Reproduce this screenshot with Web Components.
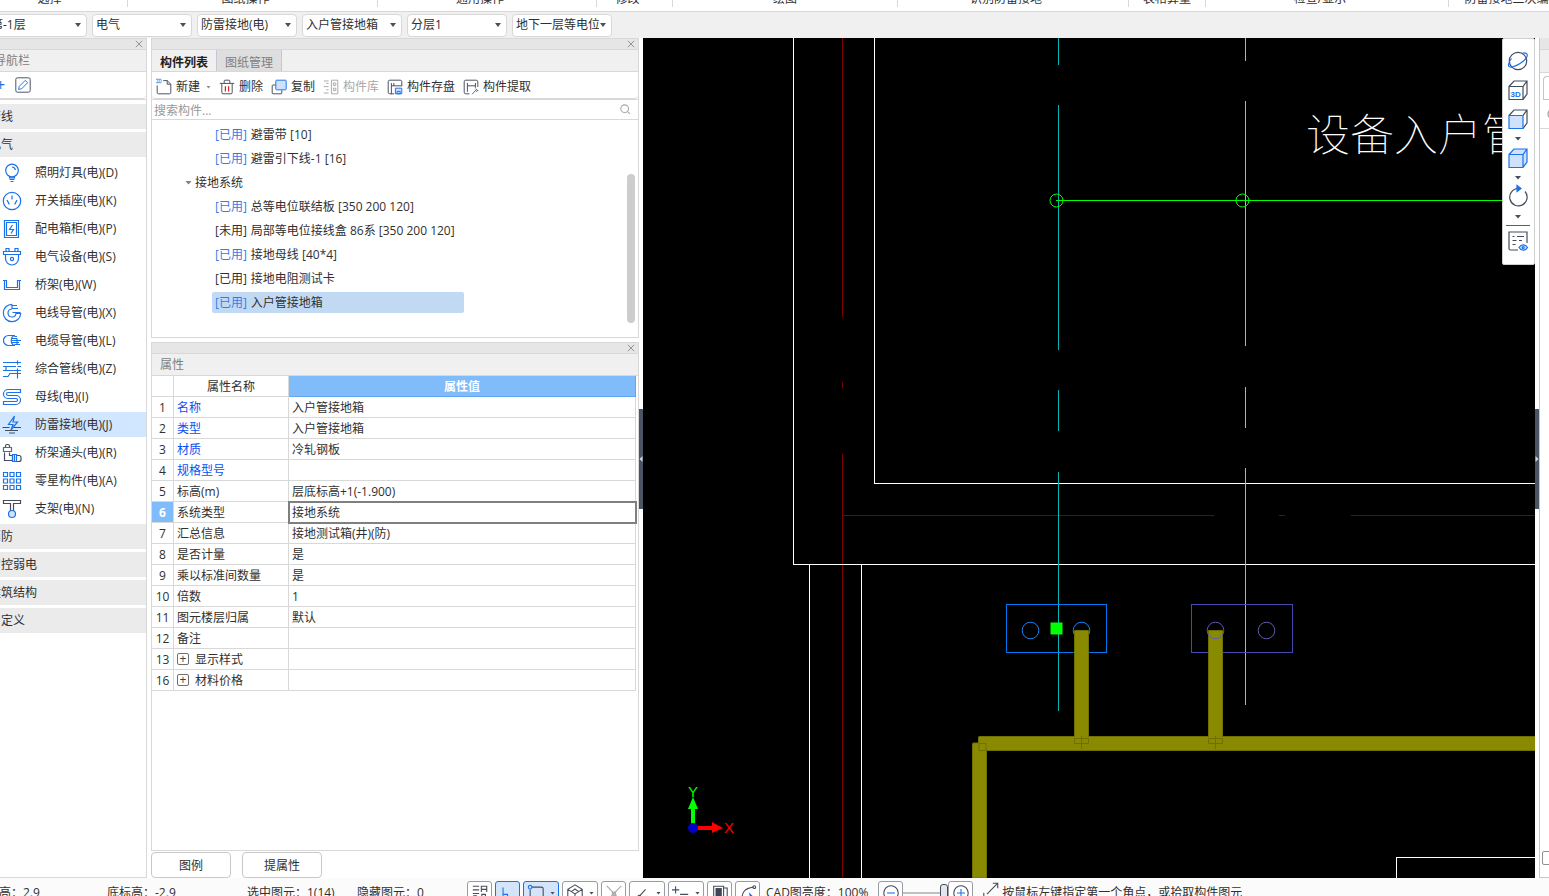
<!DOCTYPE html>
<html lang="zh-CN">
<head>
<meta charset="utf-8">
<title>防雷接地</title>
<style>
    html, body { height: 100%; margin: 0; }
    body {
        background: #fff;
        color: #303030;
        font: 12px/16px "Open Sans", "Noto Sans CJK SC", sans-serif;
        overflow: hidden;
    }
</style>
</head>
<body>
<cad-app></cad-app>

<script>
const ICONS = {
    // navigation
    bulb: '<circle cx="10" cy="7.5" r="6.3"/><path d="M10 4a3.5 3.5 0 0 1 3.4 3M7.5 13.3v1.5h5v-1.5M7.5 16.5h5M8.5 18.5h3"/>',
    socket: '<circle cx="10" cy="10" r="8.7"/><path d="M10 4.5v4M5 9l2.3 4.4M15 9l-2.3 4.4"/>',
    panel: '<path d="M2.5 1.5h14v17h-14zM4.5 3.5h10v13h-10z"/><path d="M10.5 6L7.5 10.5h4L9 14.5"/>',
    device: '<path d="M1.5 4.5h17v3h-17zM4 4.5v-3h3v3M13 4.5v-3h3v3M3.5 7.5v4c0 3.5 3 6.5 6.5 6.5s6.5-3 6.5-6.5v-4"/><circle cx="10" cy="12" r="1.6"/>',
    tray: '<path d="M1 5.5h3.5v7h11v-7H19M2.5 5.5v9h15v-9"/>',
    conduit: '<path d="M10 1.3a8.700 8.700 0 1 0 8.700 9.200H14a4 4 0 1 1-4-4.500M10 1.500v4.500M10 2.500h5M10 5.500h6M10.500 9.500h8"/>',
    cable: '<path d="M13 4.500H6.500a5 5 0 0 0 0 10h6M13 4.500c-5 1-5 9 0 10M10 7.500h5M10 9.500h9M10 11.500h7M12.500 13.500H18M15 7.500V13M12.500 5.500H15"/>',
    pipes: '<path d="M1 3.500h18M1 7.500h13M1 11.500h18M1 17.500h5l2-3h11M15.500 1.500v4M15.500 9.500v10M4 7.500v4M15.500 7.500H19"/>',
    busbar: '<path d="M18.500 2.500H6a4 4 0 0 0 0 9h8a1.500 1.500 0 0 1 0 3H1.500v3H14a4.500 4.500 0 0 0 0-9H6a1.500 1.500 0 0 1 0-3h12.500z"/>',
    ground: '<path d="M12.500 1L6.500 9.500H11L9 15l6.500-8H11z"/><path class="ink" d="M.500 12.500h7M12 12.500h7M3 15.500h13M7 18h6"/>',
    joint: '<g class="ink"><path d="M3.500 4.500V3a1.500 1.500 0 0 1 1.500-1.500h1A1.500 1.500 0 0 1 7.500 3v1.500M2.500 9.500v8h8v-5h-3v-3M14.500 12.500H17a2 2 0 0 1 2 2v2a2 2 0 0 1-2 2h-2.500"/></g><path d="M1.500 4.500h8v4h-8zM10.500 11.500h4v7h-4zM12.500 11.500v7"/>',
    grid: '<path d="M1.500 1.500h4v4h-4zM8 1.500h4v4H8zM14.500 1.500h4v4h-4zM1.500 8h4v4h-4zM8 8h4v4H8zM14.500 8h4v4h-4zM1.500 14.500h4v4h-4zM8 14.500h4v4H8zM14.500 14.500h4v4h-4z"/>',
    bracket: '<path class="ink" d="M1.500 1.500h17v3h-7V12h-3V4.500h-7z"/><circle class="tint" cx="10" cy="15" r="3.500"/>',
    edit: '<rect class="ink" x="1" y="1" width="18" height="18" rx="2"/><path d="M4.500 15.500l.8-3.800 7.500-7.500 3 3-7.500 7.500z"/>',
    // component toolbar
    create: '<path class="ink" d="M1.500 8v9a1.500 1.500 0 0 0 1.500 1.500h14a1.500 1.500 0 0 0 1.500-1.500V6.500L14 2H9M14 2v4.500h4.500"/><path stroke-dasharray="1.500 1" stroke-width="1.500" d="M.500.500h6M1.500 2.500h6M.500 4.500h6"/>',
    remove: '<path class="ink" d="M1 5.500h18M6.500 5V2.500a1 1 0 0 1 1-1h5a1 1 0 0 1 1 1V5M3.500 5.500V17a1.500 1.500 0 0 0 1.500 1.500h10a1.500 1.500 0 0 0 1.500-1.500V5.500"/><path stroke="#e02020" stroke-width="1.500" d="M8 9v6.500M12 9v6.500"/>',
    copy: '<path class="ink" d="M6 7.500H2.500a1 1 0 0 0-1 1v9a1 1 0 0 0 1 1h10a1 1 0 0 0 1-1V14"/><rect class="tint" x="6" y="1.500" width="13" height="12" rx="1"/>',
    library: '<g class="mute"><path d="M1 2.500h6M1 9.500h6M1 17.500h6M10.500 1.500h8v17h-8zM13 5h3v3h-3zM13 11.500h3v3h-3zM4 5.500h3M4 13.500h3"/></g>',
    store: '<path class="ink" d="M9 18.500H3.500a2 2 0 0 1-2-2v-13a2 2 0 0 1 2-2h13a2 2 0 0 1 2 2V9M5.500 5v14M5.500 8.500h13M8.500 8.500V5"/><path class="tint" d="M10.500 11.500h8v7h-8zM12.500 15.500h4v3h-4z"/>',
    extract: '<path class="ink" d="M8 18.500H3.500a2 2 0 0 1-2-2v-13a2 2 0 0 1 2-2h13a2 2 0 0 1 2 2V10M5.500 5v11M5.500 8.500h10M15.500 5v6M16 12l3 3M15 13.500l2.500 2.500"/><path d="M16 14l-4.500 5"/>',
    search: '<g class="mute" stroke-width="2"><circle cx="8.500" cy="8.500" r="7"/><path d="M13.500 13.500L18 18"/></g>',
    // view toolbar
    orbit: '<circle class="ink" cx="10" cy="10" r="8.700"/><path d="M3.500 7.500C0 12-.500 15.500 2 16c5 .6 15-5.500 17-10.500.9-2.600-.8-4-4.500-3.500"/>',
    cube3d: '<path class="ink" d="M1 6.500h14v13H1zM1 6.500L6 1h13v13l-4 5.500M15 6.500L19 1"/><text x="2.500" y="16.500" font-size="8" font-weight="700">3D</text>',
    cubeFront: '<path class="ink" d="M1 6.500L6 1h13v13l-4 5.500M15 6.500L19 1"/><path class="tint" d="M1 6.500h14v13H1z"/>',
    cube: '<path class="tint" d="M1 6.500L6 1h13v13l-4 5.500H1zM1 6.500h14v13M15 6.500L19 1"/>',
    rotate: '<path class="ink" d="M10 1.500a8.700 8.700 0 1 0 7 3"/><path fill="#1a73e8" d="M9-1.500v6l4-3z"/>',
    layers: '<path class="ink" d="M10 19H2.500A1.500 1.500 0 0 1 1 17.500V1h18v11M4.500 5.500h2M9 5.500h7M4.500 9.500h4M11 9.500h3M4.500 13.500h3"/><path class="tint" d="M11 16.500c2-3.600 6.500-3.600 8.500 0-2 3.600-6.500 3.600-8.500 0z"/><circle cx="15.200" cy="16.500" r="1"/>',
    // status bar
    table: '<path class="ink" d="M2 2.500h7M2 6.500h7M2 10.500h7M11.500 9V2.500h6V9M11.500 6h6M3 13h3v5H3zM12 11.500h4v4h-4z"/>',
    ortho: '<path d="M4.500 4v14h12M4.500 11.500h5v6"/>',
    box: '<path class="ink" d="M5 3.500h11a2 2 0 0 1 2 2V19M3.500 6v13"/><circle cx="3.500" cy="3.500" r="2"/>',
    solid: '<path class="ink" d="M10 1L2 6v10l8 4 8-4V6zM2 6l8 5 8-5M10 11v9M6 8.500l4-3 4 3"/>',
    cross: '<path class="mute" d="M2 2l16 17M18 2L2 19"/><circle class="mute" cx="10" cy="11" r="2"/>',
    line: '<path class="ink" d="M3 18L14 6"/><circle class="ink" cx="7" cy="14" r="1.500"/>',
    offset: '<path class="ink" d="M0 6.500h8M4 2.500v8M9 11.500h9"/>',
    fill: '<path class="ink" d="M3 2.500h11v14H3zM14 4.500h4v10"/><path fill="#404654" stroke="none" d="M5 4.500h7v9H5z"/>',
    curve: '<path class="ink" d="M3 19C3 9 6 5 16 3.500"/><circle class="ink" cx="17" cy="3.500" r="1.500"/><path fill="#404654" d="M12 11l5 5h-4z"/>',
    minus: '<circle class="ink" cx="10" cy="10" r="8"/><path d="M5.500 10h9"/>',
    plus: '<circle class="ink" cx="10" cy="10" r="8"/><path d="M5.500 10h9M10 5.500v9"/>',
    expand: '<path class="ink" d="M2 13v5h5M5.500 14.500L17 3M12 2.500h5.500V8"/>',
    close: '<path stroke="#909090" stroke-width="2.400" d="M2 2l16 16M18 2L2 18"/>'
};

function makeElement(tag, html, setup) {
    const template = document.createElement('template');
    template.innerHTML = html;

    window.customElements.define(tag, class extends HTMLElement {
        constructor() {
            super();

            this.attachShadow({ mode: 'open' });
            this.shadowRoot.append(template.content.cloneNode(true));
        }

        connectedCallback() {
            if(setup) setup(this, this.shadowRoot);
        }
    });
}

makeElement('i-con', `
    <style>
    :host { display: inline-flex; flex: none; height: var(--size, 20px); width: var(--size, 20px); }
    svg { fill: none; height: 100%; overflow: visible; stroke: #1a73e8; stroke-width: 1.2; width: 100%; }
    .ink { stroke: #454c5c; }
    .mute { stroke: #a8a8a8; }
    .tint { fill: #cfe1fb; }
    text { fill: #1a73e8; stroke: none; }
    </style>
    <svg viewBox="0 0 20 20" aria-hidden="true"></svg>
`, (host, root) => {
    if(host.getAttribute('size')) host.style.setProperty('--size', host.getAttribute('size'));
    root.querySelector('svg').innerHTML = ICONS[host.getAttribute('name')];
});

makeElement('drop-arrow', `
    <style>
    :host { background: #4a4f5c; clip-path: polygon(0 0, 100% 0, 50% 100%); display: block; flex: none; height: 4px; width: 7px; }
    </style>
`);

makeElement('ribbon-tabs', `
    <style>
    :host {
        align-items: flex-end;
        background: #fff;
        border-bottom: 1px solid #d8d8d8;
        box-sizing: border-box;
        display: flex;
        flex: none;
        height: 12px;
        overflow: hidden;
        padding-bottom: 4px;
    }
    span {
        border-right: 1px solid #d8d8d8;
        box-sizing: border-box;
        flex: none;
        text-align: center;
        white-space: nowrap;
    }
    </style>
`, (host, root) => {
    const groups = [['选择', 128, 28], ['图纸操作', 250, 14], ['通用操作', 219, 14], ['修改', 76, 14], ['绘图', 225, 0], ['识别防雷接地', 231, 14], ['表格算量', 77, 0], ['检查/显示', 243, 14], ['防雷接地二次编辑', 128, 0]];
    groups.forEach(([label, width, inset]) => {
        const span = document.createElement('span');
        span.textContent = label;
        span.style.width = width + 'px';
        span.style.paddingRight = inset + 'px';
        root.append(span);
    });
});

makeElement('filter-select', `
    <style>
    :host { align-items: center; display: grid; flex: none; width: 100px; }
    select, drop-arrow { grid-area: 1 / 1; }
    select {
        appearance: none;
        background: #fff;
        border: 1px solid #d8d8d8;
        border-radius: 4px;
        box-sizing: border-box;
        color: inherit;
        font: inherit;
        height: 23px;
        overflow: hidden;
        padding: 0 12px 0 3px;
        width: 100%;
    }
    drop-arrow { justify-self: end; margin-right: 6px; pointer-events: none; width: 6px; }
    </style>
    <select><option></option></select>
    <drop-arrow></drop-arrow>
`, (host, root) => {
    root.querySelector('option').textContent = host.getAttribute('value');
    root.querySelector('select').setAttribute('aria-label', host.getAttribute('label'));
});

makeElement('filter-bar', `
    <style>
    :host {
        align-items: center;
        background: #f0f0f0;
        display: flex;
        flex: none;
        gap: 5px;
        height: 26px;
    }
    filter-select:first-of-type { margin-left: -13px; }
    </style>
    <filter-select label="楼层" value="第-1层"></filter-select>
    <filter-select label="专业" value="电气"></filter-select>
    <filter-select label="构件类型" value="防雷接地(电)"></filter-select>
    <filter-select label="构件" value="入户管接地箱"></filter-select>
    <filter-select label="分层" value="分层1"></filter-select>
    <filter-select label="图纸" value="地下一层等电位"></filter-select>
`);

// Docked window: grip strip with a close button, then a title row
makeElement('dock-panel', `
    <style>
    :host {
        border: 1px solid #d8d8d8;
        box-sizing: border-box;
        display: flex;
        flex-direction: column;
        overflow: hidden;
    }
    .grip {
        align-items: center;
        background: #e6e6e6;
        border-bottom: 1px solid #d8d8d8;
        display: flex;
        flex: none;
        height: 10px;
        justify-content: flex-end;
        padding-right: 3px;
    }
    button { background: none; border: 0; display: flex; padding: 0; }
    .title {
        align-items: stretch;
        background: #f0f0f0;
        border-bottom: 1px solid #d8d8d8;
        color: #808080;
        display: flex;
        flex: none;
        height: 21px;
        line-height: 22px;
    }
    </style>
    <div class="grip"><button aria-label="关闭"><i-con name="close" size="8px"></i-con></button></div>
    <div class="title"><slot name="title"></slot></div>
    <slot></slot>
`);

makeElement('nav-panel', `
    <style>
    :host { display: flex; flex: none; margin-left: -16px; width: 163px; }
    dock-panel { flex: 1; }
    .title { padding-left: 9px; }
    .tools {
        align-items: center;
        border-bottom: 1px solid #d8d8d8;
        border-radius: 0 0 4px 4px;
        display: flex;
        gap: 10px;
        height: 26px;
        padding-left: 11px;
    }
    .tools button { background: none; border: 0; color: #1a73e8; display: flex; font: inherit; font-size: 16px; padding: 0; }
    nav { border-top: 1px solid #d8d8d8; display: flex; flex-direction: column; gap: 3px; padding-top: 4px; }
    nav button {
        align-items: center;
        background: none;
        border: 0;
        color: inherit;
        display: flex;
        font: inherit;
        gap: 13px;
        height: 25px;
        padding: 0 0 0 17px;
        white-space: nowrap;
    }
    nav button.group { background: #ebebeb; padding-left: 4px; }
    nav button.active { background: #d1e6ff; }
    </style>
    <dock-panel>
        <span class="title" slot="title">导航栏</span>
        <div class="tools"><button aria-label="添加">+</button><button aria-label="编辑"><i-con name="edit" size="16px"></i-con></button></div>
        <nav></nav>
    </dock-panel>
`, (host, root) => {
    const entries = [
        ['管线'], ['电气'],
        ['照明灯具(电)(D)', 'bulb'], ['开关插座(电)(K)', 'socket'], ['配电箱柜(电)(P)', 'panel'],
        ['电气设备(电)(S)', 'device'], ['桥架(电)(W)', 'tray'], ['电线导管(电)(X)', 'conduit'],
        ['电缆导管(电)(L)', 'cable'], ['综合管线(电)(Z)', 'pipes'], ['母线(电)(I)', 'busbar'],
        ['防雷接地(电)(J)', 'ground'], ['桥架通头(电)(R)', 'joint'], ['零星构件(电)(A)', 'grid'],
        ['支架(电)(N)', 'bracket'],
        ['消防'], ['智控弱电'], ['建筑结构'], ['自定义']
    ];
    root.querySelector('nav').innerHTML = entries.map(([label, icon]) => icon
        ? `<button class="${icon === 'ground' ? 'active' : ''}"><i-con name="${icon}"></i-con>${label}</button>`
        : `<button class="group">${label}</button>`).join('');
});

makeElement('component-list', `
    <style>
    :host { display: flex; flex: none; height: 300px; }
    dock-panel { flex: 1; }
    [role=tablist] { display: flex; }
    [role=tab] {
        background: #dedede;
        border: 0;
        border-right: 1px solid #c4c8d0;
        box-sizing: border-box;
        color: #808080;
        font: inherit;
        padding: 2px 8px 0;
        width: 65px;
        white-space: nowrap;
    }
    [aria-selected=true] { background: #f0f0f0; color: #202020; font-weight: bold; }
    .tools {
        align-items: center;
        border-bottom: 1px solid #d8d8d8;
        border-radius: 0 0 4px 4px;
        box-sizing: border-box;
        display: flex;
        flex: none;
        gap: 8px;
        height: 27px;
        padding: 4px 0 0 4px;
    }
    .tools button {
        align-items: center;
        background: none;
        border: 0;
        color: inherit;
        display: flex;
        font: inherit;
        gap: 4px;
        padding: 0;
    }
    .tools button:disabled { color: #a8a8a8; }
    .tools drop-arrow { background: #909090; height: 3px; margin-left: 2px; width: 5px; }
    .search {
        align-items: center;
        border-bottom: 1px solid #d8d8d8;
        border-top: 1px solid #d8d8d8;
        display: flex;
        flex: none;
        height: 19px;
        padding: 0 7px 0 2px;
    }
    input { border: 0; color: inherit; flex: 1; font: inherit; outline: 0; padding: 2px 0 0; }
    input::placeholder { color: #989898; opacity: 1; }
    .body { display: flex; flex: 1; justify-content: space-between; }
    ul { list-style: none; margin: 0; padding: 4px 0 0 60px; width: 252px; }
    li { align-items: center; border-radius: 2px; display: flex; gap: 4px; height: 21px; margin-bottom: 3px; padding-left: 3px; white-space: pre; }
    li.parent { margin-left: -30px; padding-left: 3px; gap: 3px; }
    li.parent drop-arrow { background: #808080; }
    li.selected { background: #c1d9f2; }
    .used { color: #3879e8; }
    .thumb { background: #cdcdcd; border-radius: 4px; height: 149px; margin: 54px 3px 0 0; width: 8px; }
    </style>
    <dock-panel>
        <div slot="title" role="tablist">
            <button role="tab" aria-selected="true">构件列表</button><button role="tab" aria-selected="false">图纸管理</button>
        </div>
        <div class="tools">
            <button><i-con name="create" size="16px"></i-con>新建<drop-arrow></drop-arrow></button>
            <button><i-con name="remove" size="16px"></i-con>删除</button>
            <button><i-con name="copy" size="16px"></i-con>复制</button>
            <button disabled><i-con name="library" size="16px"></i-con>构件库</button>
            <button><i-con name="store" size="16px"></i-con>构件存盘</button>
            <button><i-con name="extract" size="16px"></i-con>构件提取</button>
        </div>
        <div class="search"><input placeholder="搜索构件..." aria-label="搜索构件"><i-con name="search" size="11px"></i-con></div>
        <div class="body">
            <ul>
                <li><span class="used">[已用]</span><span>避雷带 [10]</span></li>
                <li><span class="used">[已用]</span><span>避雷引下线-1 [16]</span></li>
                <li class="parent"><drop-arrow></drop-arrow>接地系统</li>
                <li><span class="used">[已用]</span><span>总等电位联结板 [350 200 120]</span></li>
                <li><span>[未用]</span><span>局部等电位接线盒 86系 [350 200 120]</span></li>
                <li><span class="used">[已用]</span><span>接地母线 [40*4]</span></li>
                <li><span>[已用]</span><span>接地电阻测试卡</span></li>
                <li class="selected"><span class="used">[已用]</span><span>入户管接地箱</span></li>
            </ul>
            <div class="thumb"></div>
        </div>
    </dock-panel>
`);

makeElement('property-grid', `
    <style>
    :host { display: flex; flex: 1; margin-top: 4px; min-height: 0; }
    dock-panel { flex: 1; }
    .title { padding-left: 8px; }
    table { border-collapse: collapse; flex: none; margin: 0 2px 0 -1px; table-layout: fixed; width: 485px; }
    col.no { width: 22px; }
    col.name { width: 115px; }
    th, td { border: 1px solid #d8d8d8; font-weight: normal; height: 18px; line-height: 18px; padding: 2px 3px 0; text-align: left; white-space: nowrap; }
    tr:first-child th { border-top: 0; }
    thead th { text-align: center; }
    tbody th { padding: 2px 0 0; text-align: center; }
    thead th.value { background: #80bbfa; border-color: #60a5f0; color: #fff; font-weight: bold; }
    .key { color: #0a50f0; }
    .current th { background: #80bbfa; color: #fff; font-weight: bold; }
    .current td:last-child { outline: 2px solid #7f7f7f; outline-offset: -1px; }
    .toggle {
        background: #fff;
        border: 1px solid #707070;
        border-radius: 2px;
        color: #404040;
        font: inherit;
        height: 12px;
        line-height: 8px;
        margin: 0 6px 0 0;
        padding: 0;
        vertical-align: 1px;
        width: 12px;
    }
    </style>
    <dock-panel>
        <span class="title" slot="title">属性</span>
        <table>
            <colgroup><col class="no"><col class="name"><col></colgroup>
            <thead><tr><th></th><th>属性名称</th><th class="value">属性值</th></tr></thead>
            <tbody></tbody>
        </table>
    </dock-panel>
`, (host, root) => {
    const rows = [
        [1, '名称', '入户管接地箱'], [2, '类型', '入户管接地箱'], [3, '材质', '冷轧钢板'], [4, '规格型号', ''],
        [5, '标高(m)', '层底标高+1(-1.900)'], [6, '系统类型', '接地系统'], [7, '汇总信息', '接地测试箱(井)(防)'],
        [8, '是否计量', '是'], [9, '乘以标准间数量', '是'], [10, '倍数', '1'], [11, '图元楼层归属', '默认'],
        [12, '备注', ''], [13, '显示样式', ''], [16, '材料价格', '']
    ];
    root.querySelector('tbody').innerHTML = rows.map(([no, name, value]) => `
        <tr class="${no === 6 ? 'current' : ''}">
            <th>${no}</th>
            <td class="${no < 5 ? 'key' : ''}">${no > 12 ? '<button class="toggle" aria-label="展开">+</button>' : ''}${name}</td>
            <td>${value}</td>
        </tr>`).join('');
});

makeElement('split-handle', `
    <style>
    :host { display: flex; flex: none; flex-direction: column; width: 4px; padding-top: 371px; }
    button { align-items: center; background: #4a5462; border: 0; display: flex; height: 100px; padding: 0; width: 4px; }
    svg { width: 4px; height: 6px; }
    </style>
    <button aria-label="折叠"><svg viewBox="0 0 4 6"><path d="M3.5 0v6L.5 3z" fill="#d0d4dc"/></svg></button>
`, (host, root) => {
    if(host.hasAttribute('right')) root.querySelector('path').setAttribute('d', 'M.5 0v6L3.5 3z');
});

makeElement('cad-canvas', `
    <style>
    :host { background: #000; display: block; flex: 1; min-width: 0; position: relative; }
    svg { display: block; height: 100%; width: 100%; }
    .draw { fill: none; shape-rendering: crispEdges; }
    view-tools { position: absolute; right: 0; top: 0; }
    </style>
    <svg viewBox="643 38 892 840" preserveAspectRatio="xMinYMin slice">
        <g class="draw">
            <path stroke="#800000" d="M842.5 38V317M842.5 382v6M842.5 454V878M842 515.5H1214M1279 515.5h6M1351 515.5H1535"/>
            <path stroke="#fff" d="M793.5 38V564.5H1535M874.5 38V483.5H1535M809.5 565V878M861.5 565V878M1396.5 878V857.5H1535"/>
            <path stroke="#00b4b4" d="M1058.5 38V65M1058.5 105V350M1058.5 390V431M1058.5 472V711"/>
            <path stroke="#0ff" d="M1245.5 38V61M1245.5 101V346M1245.5 387V428M1245.5 468V705"/>
            <path stroke="#0f0" d="M1056 200.5H1535"/>
            <path stroke="#0078f0" d="M1006.5 604.5h100v48h-100z"/>
            <path stroke="#4848b0" d="M1191.5 604.5h101v48h-101z"/>
        </g>
        <g fill="none">
            <g stroke="#0f0"><circle cx="1056.5" cy="200.5" r="6.5"/><circle cx="1242.5" cy="200.5" r="6.5"/></g>
            <g stroke="#1488ff"><circle cx="1030.5" cy="630.5" r="8.3"/><circle cx="1081.5" cy="630.5" r="8.3"/></g>
        </g>
        <g fill="#8a8a00" stroke="#707000" stroke-width="1">
            <path d="M972.5 878V744q0-1 1-1h5v-6q0-.5 1-.5H1074.5V630.5h14V736.5H1208.5V630.5h14V736.5H1540V750.5H986.5V878z"/>
            <path fill="none" d="M979 743.5h7v7h-7zM1074.5 738.5h14v5h-14zM1208.5 738.5h14v5h-14zM1081.5 736v13M1215.5 736v13"/>
        </g>
        <g fill="none" stroke="#5c5cb8"><circle cx="1215.5" cy="630.5" r="8.3"/><circle cx="1266.5" cy="630.5" r="8.3"/></g>
        <path fill="#0f0" d="M1050.5 622.5h12v12h-12z"/>
        <text x="1306" y="151" fill="#fff" font-size="44" font-weight="100" font-family="Noto Sans CJK SC, sans-serif">设备入户管</text>
        <path fill="#0f0" d="M691 824V809h-3l5-12 5 12h-3v15z"/>
        <path fill="#f00" d="M697 826h15v-4l11 6-11 5v-3h-15z"/>
        <circle cx="693" cy="828" r="5" fill="#0000c8"/>
        <g font-family="Liberation Sans, sans-serif" font-size="15">
            <text x="688" y="797" fill="#0f0">Y</text>
            <text x="724" y="833" fill="#f00">X</text>
        </g>
    </svg>
    <view-tools></view-tools>
`);

makeElement('view-tools', `
    <style>
    :host {
        align-items: center;
        background: #fff;
        border: 1px solid #d0d0d0;
        border-radius: 2px;
        box-sizing: border-box;
        display: flex;
        flex-direction: column;
        padding: 12px 1px 13px 0;
        width: 33px;
    }
    button { align-items: center; background: none; border: 0; display: flex; height: 20px; justify-content: center; padding: 0; width: 24px; }
    .view + .view { margin-top: 9px; }
    .more { height: 19px; }
    hr { border: 0; border-top: 1px solid #606060; margin: -1px 0 5px; width: 24px; }
    </style>
    <button class="view" aria-label="动态观察"><i-con name="orbit"></i-con></button>
    <button class="view" aria-label="三维"><i-con name="cube3d"></i-con></button>
    <button class="view" aria-label="前视"><i-con name="cubeFront"></i-con></button>
    <button class="more" aria-label="更多视图"><drop-arrow></drop-arrow></button>
    <button aria-label="实体"><i-con name="cube"></i-con></button>
    <button class="more" aria-label="更多显示"><drop-arrow></drop-arrow></button>
    <button aria-label="旋转"><i-con name="rotate"></i-con></button>
    <button class="more" aria-label="更多旋转"><drop-arrow></drop-arrow></button>
    <hr>
    <button aria-label="图元显示"><i-con name="layers"></i-con></button>
`);

makeElement('side-dock', `
    <style>
    :host { border-left: 1px solid #c8c8c8; box-sizing: border-box; display: flex; flex: none; flex-direction: column; overflow: hidden; width: 10px; }
    .grip { background: #e6e6e6; border-bottom: 1px solid #d8d8d8; height: 11px; }
    .title { background: #f0f0f0; border-bottom: 1px solid #d8d8d8; height: 22px; }
    .tab { border: 1px solid #c0c4cc; border-radius: 4px 0 0 0; border-right: 0; height: 22px; margin: 3px 0 0 3px; }
    .find { border-bottom: 1px solid #d8d8d8; height: 29px; padding: 8px 0 0 7px; box-sizing: border-box; }
    .foot { border-bottom: 1px solid #c8c8c8; margin-top: auto; padding: 0 0 12px 2px; }
    input { appearance: none; border: 1px solid #909090; border-radius: 2px; display: block; height: 14px; margin: 0; width: 14px; }
    </style>
    <div class="grip"></div><div class="title"></div><div class="tab"></div>
    <div class="find"><i-con name="search" size="14px"></i-con></div>
    <div class="foot"><input type="checkbox" aria-label="选项"></div>
`);

makeElement('status-bar', `
    <style>
    :host {
        background: #fbfbfb;
        box-sizing: border-box;
        display: flex;
        flex: none;
        height: 18px;
        line-height: 24px;
        overflow: hidden;
        padding-top: 3px;
        white-space: nowrap;
    }
    .cell { flex: none; width: 110px; }
    .cell.first { margin-left: -13px; width: 120px; }
    .cell.wide { width: 140px; }
    .modes { display: flex; flex: none; gap: 3px; margin-right: 6px; }
    button {
        align-items: center;
        background: #fff;
        border: 1px solid #989ca4;
        border-radius: 3px;
        box-sizing: border-box;
        display: flex;
        flex: none;
        height: 24px;
        justify-content: space-between;
        padding: 0 3px;
        width: 25px;
    }
    button.menu { width: 36px; }
    button.on { background: #d3e4fb; border-color: #1a73e8; }
    drop-arrow { height: 3px; width: 5px; }
    .zoom { align-items: center; display: flex; height: 24px; margin: 0 9px 0 10px; }
    input { appearance: none; background: linear-gradient(#c0c0c0, #c0c0c0) center / 100% 2px no-repeat; height: 20px; margin: 0; width: 45px; }
    input::-webkit-slider-thumb { appearance: none; background: #e4e6ec; border: 1px solid #454c5c; border-radius: 3px; height: 18px; width: 8px; }
    .hint { display: flex; gap: 2px; }
    </style>
    <span class="cell first">层高：2.9</span>
    <span class="cell wide">底标高：-2.9</span>
    <span class="cell">选中图元：1(14)</span>
    <span class="cell">隐藏图元：0</span>
    <div class="modes">
        <button aria-label="列表"><i-con name="table" size="18px"></i-con></button>
        <button class="on" aria-label="正交"><i-con name="ortho" size="18px"></i-con></button>
        <button class="on menu" aria-label="框选"><i-con name="box" size="18px"></i-con><drop-arrow></drop-arrow></button>
        <button class="menu" aria-label="实体"><i-con name="solid" size="18px"></i-con><drop-arrow></drop-arrow></button>
        <button aria-label="交点"><i-con name="cross" size="18px"></i-con></button>
        <button class="menu" aria-label="直线"><i-con name="line" size="18px"></i-con><drop-arrow></drop-arrow></button>
        <button class="menu" aria-label="偏移"><i-con name="offset" size="18px"></i-con><drop-arrow></drop-arrow></button>
        <button aria-label="填充"><i-con name="fill" size="18px"></i-con></button>
        <button aria-label="曲线"><i-con name="curve" size="18px"></i-con></button>
    </div>
    <span>CAD图亮度：100%</span>
    <div class="zoom">
        <button aria-label="减小"><i-con name="minus" size="18px"></i-con></button>
        <input type="range" value="100" aria-label="CAD图亮度">
        <button aria-label="增大"><i-con name="plus" size="18px"></i-con></button>
    </div>
    <span class="hint"><i-con name="expand" size="18px"></i-con>按鼠标左键指定第一个角点，或拾取构件图元</span>
`);

makeElement('cad-app', `
    <style>
    :host { display: flex; flex-direction: column; height: 100%; overflow: hidden; }
    main { display: flex; flex: 1; min-height: 0; }
    .column { display: flex; flex: none; flex-direction: column; margin-left: 4px; width: 488px; }
    .actions { display: flex; flex: none; gap: 11px; padding-top: 1px; }
    .actions button {
        background: #fff;
        border: 1px solid #c8c8c8;
        border-radius: 4px;
        box-sizing: border-box;
        color: inherit;
        font: inherit;
        height: 26px;
        padding: 2px 0 0;
        width: 80px;
    }
    </style>
    <ribbon-tabs></ribbon-tabs>
    <filter-bar></filter-bar>
    <main>
        <nav-panel></nav-panel>
        <div class="column">
            <component-list></component-list>
            <property-grid></property-grid>
            <div class="actions"><button>图例</button><button>提属性</button></div>
        </div>
        <split-handle></split-handle>
        <cad-canvas></cad-canvas>
        <split-handle right></split-handle>
        <side-dock></side-dock>
    </main>
    <status-bar></status-bar>
`);
</script>
</body>
</html>
